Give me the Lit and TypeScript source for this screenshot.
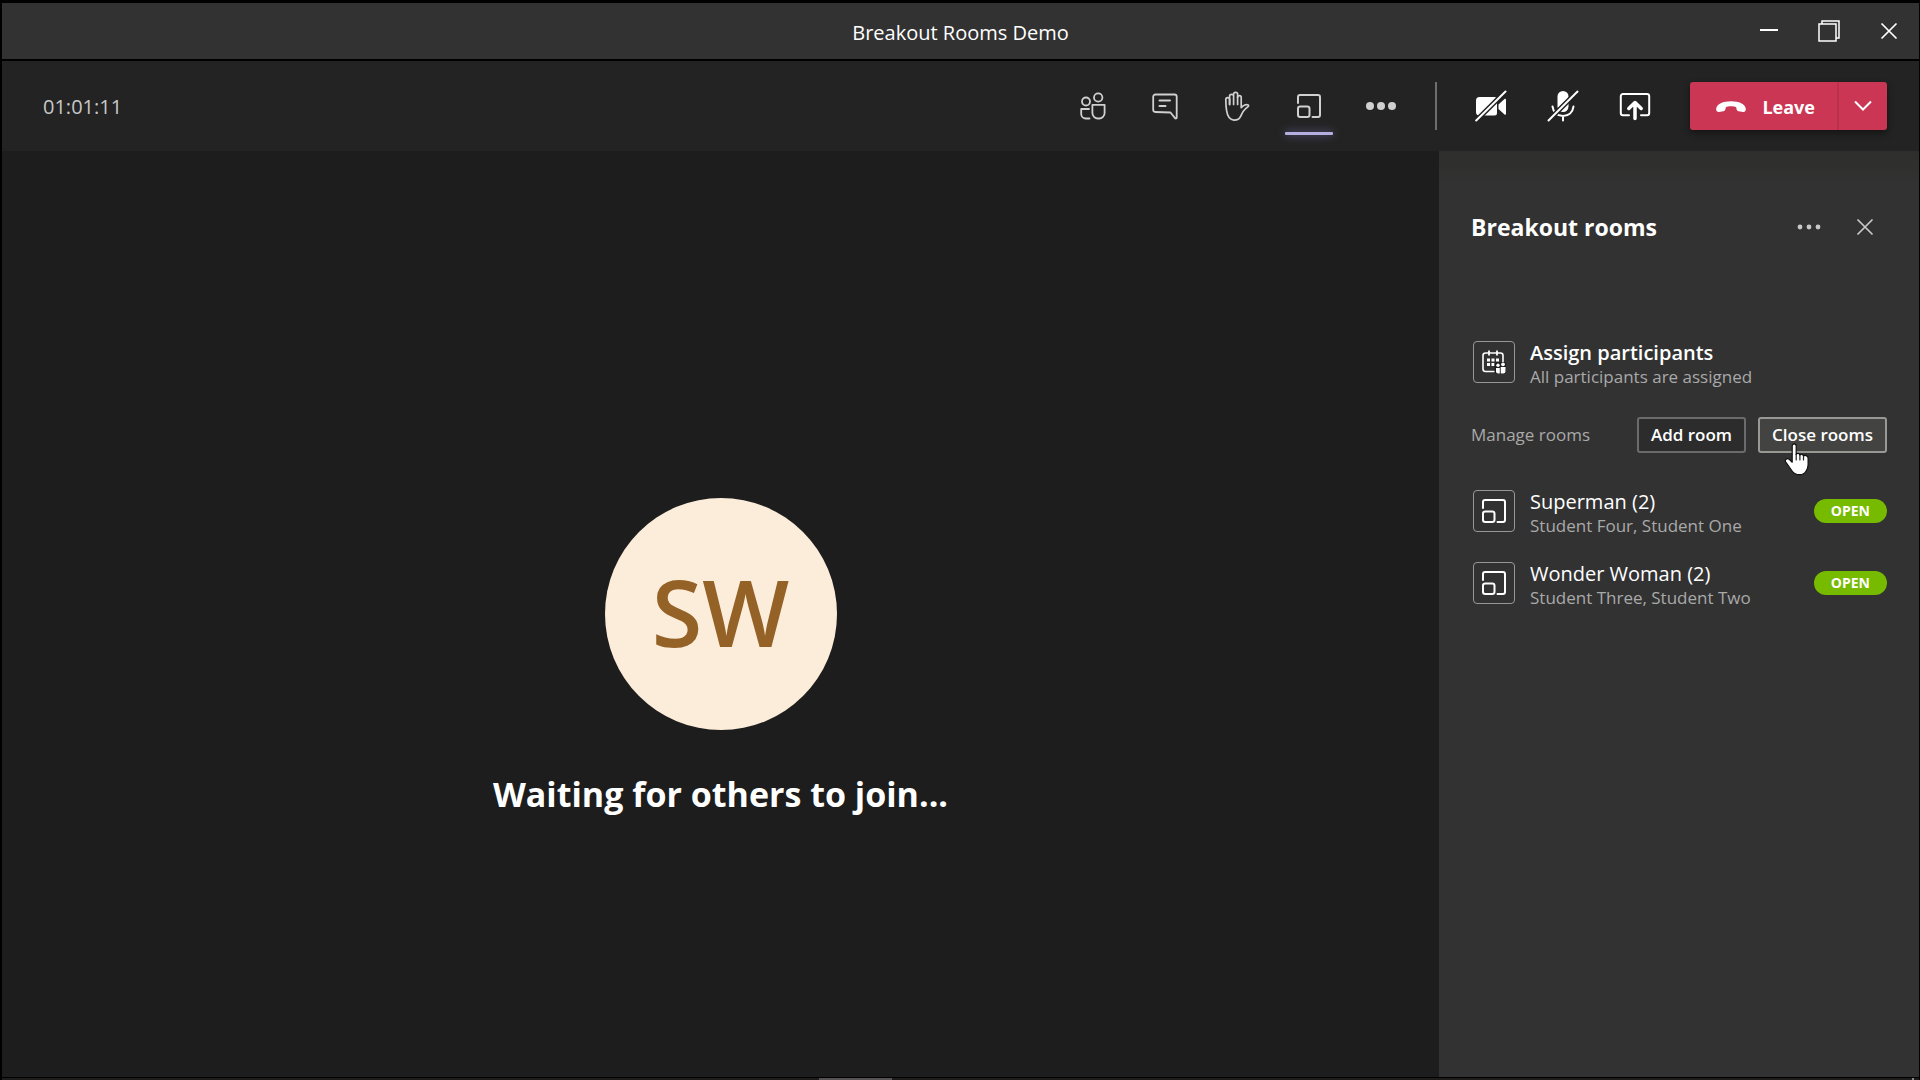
import { LitElement, html, svg, css } from "lit";
import { customElement, state } from "lit/decorators.js";
import { classMap } from "lit/directives/class-map.js";

const roomsIcon = svg`<svg viewBox="0 0 24 24" width="24" height="24" fill="none" stroke="currentColor" stroke-width="2" stroke-linecap="round" aria-hidden="true">
  <path d="M1 9V3a2 2 0 0 1 2-2h18a2 2 0 0 1 2 2v18a2 2 0 0 1-2 2h-5.500"/>
  <rect x="1" y="12.500" width="11.500" height="10.500" rx="2.200"/>
</svg>`;

const peopleIcon = svg`<svg viewBox="0 0 26 28" width="26" height="28" fill="none" stroke="currentColor" stroke-width="1.800" stroke-linecap="round" stroke-linejoin="round" aria-hidden="true">
  <circle cx="6" cy="9.500" r="4"/>
  <circle cx="18.200" cy="5.500" r="4.200"/>
  <path d="M12.400 12.800h12.200v8.200a5.500 5.500 0 0 1-5.500 5.500h-1.200a5.500 5.500 0 0 1-5.500-5.500z"/>
  <path d="M9 17H1.200v5a4.500 4.500 0 0 0 4.500 4.500H9.500"/>
</svg>`;

const chatIcon = svg`<svg viewBox="0 0 26 28" width="26" height="28" fill="none" stroke="currentColor" stroke-width="1.800" stroke-linecap="round" stroke-linejoin="round" aria-hidden="true">
  <path d="M3.500 2.500h19a2.200 2.200 0 0 1 2.200 2.200v20.800c0 1-1 1.300-1.700.6L18.500 20.500 3.300 20a2.200 2.200 0 0 1-2.100-2.200V4.700a2.200 2.200 0 0 1 2.300-2.200z"/>
  <path d="M7.500 8.500h10.500M7.500 14h6" stroke-width="2"/>
</svg>`;

const handIcon = svg`<svg viewBox="0 0 26 30" width="26" height="30" fill="none" stroke="currentColor" stroke-width="1.700" stroke-linecap="round" stroke-linejoin="round" aria-hidden="true">
  <path d="M5.600 13.500V8.300c0-2.200-3.800-2.200-3.800.2 0 3.500.2 7.500.8 11.200.6 3.800 2.600 9.200 7.200 9.400 3 .1 5.500-.7 6.800-3.700 1.500-3.500 3-6.200 5.500-8.200 1.300-1 2.200-1.600 2.400-2.300.4-1.300-2-1.600-3.700-.8-1.500.7-2.500 1.400-3.600 2.600V6.300c0-2.200-3.600-2.200-3.600 0"/>
  <path d="M5.600 13.500V5c0-2.300 4-2.300 4 0v8.500M9.600 12.500V3c0-2.300 4-2.300 4 0v10.500M9.600 5V4M13.600 13.500V6"/>
</svg>`;

const moreIcon = svg`<svg viewBox="0 0 32 10" width="32" height="10" fill="currentColor" aria-hidden="true">
  <circle cx="5" cy="5" r="4"/><circle cx="16" cy="5" r="4"/><circle cx="27" cy="5" r="4"/>
</svg>`;

const smallMoreIcon = svg`<svg viewBox="0 0 24 6" width="24" height="6" fill="currentColor" aria-hidden="true">
  <circle cx="3" cy="3" r="2.400"/><circle cx="12" cy="3" r="2.400"/><circle cx="21" cy="3" r="2.400"/>
</svg>`;

const cameraIcon = svg`<svg viewBox="0 0 32 32" width="32" height="32" aria-hidden="true">
  <path d="M4.500 7h15A2.500 2.500 0 0 1 22 9.500v13.500a2.500 2.500 0 0 1-2.500 2.500h-15A3.500 3.500 0 0 1 1 22V10.500A3.500 3.500 0 0 1 4.500 7z" fill="currentColor"/>
  <path d="M23.500 14.500 29.500 9c.7-.6 1.500-.3 1.500.6v14.200c0 .9-.8 1.200-1.500.6l-6-5.400z" fill="currentColor"/>
  <path d="M1.200 30.500 30.500 1.500" stroke="#232323" stroke-width="5"/>
  <path d="M1.200 30.500 30.500 1.500" stroke="currentColor" stroke-width="2" stroke-linecap="round"/>
</svg>`;

const micIcon = svg`<svg viewBox="0 0 32 32" width="32" height="32" fill="none" stroke="currentColor" stroke-linecap="round" aria-hidden="true">
  <rect x="10.500" y="1" width="11" height="21" rx="5.500" fill="currentColor" stroke="none"/>
  <path d="M5.500 16.500c.8 6 5 9.500 10.500 9.500s9.700-3.500 10.500-9.500M16 26v4.500" stroke-width="2"/>
  <path d="M1.500 30.500 30.500 1.500" stroke="#232323" stroke-width="5"/>
  <path d="M1.500 30.500 30.500 1.500" stroke-width="2"/>
</svg>`;

const shareIcon = svg`<svg viewBox="0 0 32 32" width="32" height="32" fill="none" stroke="currentColor" stroke-linecap="round" stroke-linejoin="round" aria-hidden="true">
  <path d="M10 25.200H4a2.200 2.200 0 0 1-2.200-2.200V6.200A2.200 2.200 0 0 1 4 4h24a2.200 2.200 0 0 1 2.200 2.200V23a2.200 2.200 0 0 1-2.200 2.200h-6" stroke-width="2"/>
  <path d="M16 28.500V13.500M9.800 18.500 16 12.500l6.200 6" stroke-width="3.500"/>
</svg>`;

const phoneIcon = svg`<svg viewBox="0 0 32 14" width="32" height="14" fill="currentColor" aria-hidden="true">
  <path d="M1.200 8.500C1.800 4 8 1.200 16 1.200S30.200 4 30.800 8.500c.2 2.300-.8 3.800-2.800 3.600l-4.300-.8c-1.300-.3-2-1.100-2.200-2.300l-.3-1.800C19 6 13 6 10.800 7.200L10.500 9c-.2 1.200-.9 2-2.200 2.300l-4.300.8c-2 .2-3-1.300-2.800-3.600z"/>
</svg>`;

const chevronIcon = svg`<svg viewBox="0 0 18 12" width="18" height="12" fill="none" stroke="currentColor" stroke-width="2" aria-hidden="true">
  <path d="M1 1.500 9 9.500 17 1.500"/>
</svg>`;

const closeIcon = svg`<svg viewBox="0 0 18 18" width="18" height="18" fill="none" stroke="currentColor" stroke-width="1.700" aria-hidden="true">
  <path d="M1.500 1.500 16.500 16.500M16.500 1.500 1.500 16.500"/>
</svg>`;

const minimizeIcon = svg`<svg viewBox="0 0 18 18" width="18" height="18" fill="currentColor" aria-hidden="true">
  <rect x="0" y="7" width="18" height="2"/>
</svg>`;

const restoreIcon = svg`<svg viewBox="0 0 22 22" width="22" height="22" fill="none" stroke="currentColor" stroke-width="1.500" aria-hidden="true">
  <rect x="1" y="4" width="17" height="17"/>
  <path d="M4 4V1h17v17h-3"/>
</svg>`;

const calendarIcon = svg`<svg viewBox="0 0 24 24" width="24" height="24" fill="none" aria-hidden="true">
  <rect x="1" y="3" width="20" height="18.500" rx="2.500" stroke="currentColor" stroke-width="1.600"/>
  <path d="M7 .5v5M15 .5v5" stroke="currentColor" stroke-width="1.800"/>
  <path d="M5 8.500h3v3H5zM9.500 8.500h3v3h-3zM14 8.500h3v3h-3zM5 13h3v3H5zM9.500 13h3v3h-3z" fill="currentColor"/>
  <rect x="12.500" y="12" width="11.500" height="12" rx="2" fill="#1d1d1d"/>
  <circle cx="16" cy="15.300" r="1.700" fill="currentColor"/>
  <circle cx="21" cy="14.300" r="1.900" fill="currentColor"/>
  <path d="M14 18h3.800v5.500H16a2 2 0 0 1-2-2zM18.700 17h4.800v4.500a2 2 0 0 1-2 2h-2.800z" fill="currentColor"/>
</svg>`;

const pointerIcon = svg`<svg viewBox="0 0 26 33" width="26" height="33" aria-hidden="true">
  <path d="M8.200 3.200c0-3 4-3 4 0v8.300c.6-1.700 3.600-1.300 3.700.7.700-1.500 3.500-1.200 3.600 1 .8-1.300 4.600-1 4.600 2v6.300c0 3-1 5-2 6.500-1.300 2.500-3 3.700-6.500 3.700-3.200 0-5.500-.8-7.500-3.700L1.800 19.200c-1.500-2 1-4.500 3.400-2.900l3 2.900z" fill="#fff" stroke="#111" stroke-width="1.200" stroke-linejoin="round"/>
  <path d="M12.200 11v6M15.900 12v5M19.500 13.500V17" stroke="#222" stroke-width="1.200" stroke-linecap="round"/>
</svg>`;

interface Room {
  name: string;
  members: string[];
}

@customElement("breakout-panel")
export class BreakoutPanel extends LitElement {
  @state() private rooms: Room[] = [
    { name: "Superman", members: ["Student Four", "Student One"] },
    { name: "Wonder Woman", members: ["Student Three", "Student Two"] },
  ];

  static styles = css`
    :host {
      display: block;
      box-sizing: border-box;
      padding: 52px 32px;
      background: linear-gradient(#2e2e2d, #323232 36px);
      color: #fff;
    }
    button {
      font: inherit;
      color: inherit;
      margin: 0;
      cursor: pointer;
    }
    .head {
      display: flex;
      align-items: center;
      height: 48px;
      margin-bottom: 87px;
    }
    h2 {
      flex: 1;
      margin: 0;
      font-size: 23px;
      line-height: 32px;
      font-weight: 700;
    }
    .icon-button {
      display: grid;
      place-items: center;
      width: 44px;
      height: 44px;
      padding: 0;
      border: 0;
      background: none;
      color: #c8c8c8;
    }
    .icon-button + .icon-button {
      margin-left: 12px;
    }
    .row {
      display: flex;
      align-items: center;
      gap: 15px;
      height: 48px;
      padding-left: 2px;
    }
    .tile {
      display: grid;
      place-items: center;
      box-sizing: border-box;
      width: 42px;
      height: 42px;
      border: 1px solid #979797;
      border-radius: 4px;
    }
    .text {
      flex: 1;
      min-width: 0;
      padding-top: 6px;
    }
    .name,
    .sub {
      margin: 0;
      line-height: 24px;
      white-space: nowrap;
    }
    .name {
      font-size: 20px;
      font-weight: 500;
    }
    .strong {
      font-weight: 600;
    }
    .sub,
    .label {
      font-size: 17px;
      font-weight: 400;
      color: #a9a9a9;
    }
    .manage {
      display: flex;
      align-items: center;
      gap: 12px;
      margin: 31px 0 34px;
    }
    .label {
      flex: 1;
      margin: 0;
      line-height: 24px;
    }
    .action {
      position: relative;
      height: 36px;
      padding: 0 12px;
      border: 2px solid #6b6b6b;
      border-radius: 3px;
      background: #2d2c2c;
      font-size: 17px;
      line-height: 24px;
      font-weight: 600;
      white-space: nowrap;
    }
    .hovered {
      background: #434341;
      border-color: #989895;
    }
    .pointer {
      position: absolute;
      left: 24px;
      top: 24px;
      display: block;
      height: 33px;
      pointer-events: none;
    }
    ul {
      display: grid;
      gap: 24px;
      margin: 0;
      padding: 0;
      list-style: none;
    }
    .status {
      height: 24px;
      padding: 0 17px;
      border-radius: 12px;
      background: #77bb00;
      font-size: 14px;
      line-height: 24px;
      font-weight: 700;
    }
  `;

  render() {
    return html`
      <header class="head">
        <h2>Breakout rooms</h2>
        <button class="icon-button" aria-label="More options">${smallMoreIcon}</button>
        <button class="icon-button" aria-label="Close panel">${closeIcon}</button>
      </header>
      <section class="row">
        <span class="tile">${calendarIcon}</span>
        <div class="text">
          <h3 class="name strong">Assign participants</h3>
          <p class="sub">All participants are assigned</p>
        </div>
      </section>
      <section class="manage">
        <p class="label">Manage rooms</p>
        <button class="action">Add room</button>
        <button class="action hovered">
          Close rooms<span class="pointer">${pointerIcon}</span>
        </button>
      </section>
      <ul>
        ${this.rooms.map(
          (room) => html`<li class="row">
            <span class="tile">${roomsIcon}</span>
            <div class="text">
              <h3 class="name">${room.name} (${room.members.length})</h3>
              <p class="sub">${room.members.join(", ")}</p>
            </div>
            <span class="status">OPEN</span>
          </li>`
        )}
      </ul>
    `;
  }
}

@customElement("app-root")
export class AppRoot extends LitElement {
  @state() private activeTool = "Breakout rooms";

  private tools = [
    { label: "Participants", icon: peopleIcon },
    { label: "Chat", icon: chatIcon },
    { label: "Raise hand", icon: handIcon },
    { label: "Breakout rooms", icon: roomsIcon },
    { label: "More actions", icon: moreIcon },
  ];

  private devices = [
    { label: "Turn camera on", icon: cameraIcon },
    { label: "Unmute", icon: micIcon },
    { label: "Share screen", icon: shareIcon },
  ];

  static styles = css`
    :host {
      display: flex;
      flex-direction: column;
      box-sizing: border-box;
      min-height: 100vh;
      padding: 3px 1px 0 2px;
      background: #000;
      color: #fff;
      font-family: "Open Sans", "Noto Sans", sans-serif;
    }
    button {
      display: grid;
      place-items: center;
      margin: 0;
      padding: 0;
      border: 0;
      background: none;
      font: inherit;
      color: inherit;
      cursor: pointer;
    }
    .titlebar {
      display: grid;
      grid-template-columns: 1fr auto 1fr;
      align-items: center;
      height: 56px;
      margin-bottom: 2px;
      background: #323232;
    }
    h1 {
      grid-column: 2;
      margin: 0;
      padding-top: 4px;
      font-size: 20px;
      line-height: 28px;
      font-weight: 400;
    }
    .window {
      display: flex;
      justify-self: end;
    }
    .window button {
      width: 60px;
      height: 56px;
    }
    .toolbar {
      display: flex;
      align-items: center;
      height: 90px;
      padding: 0 32px 0 41px;
      background: #232323;
    }
    .timer {
      flex: 1;
      padding-top: 2px;
      font-size: 20px;
      line-height: 28px;
      color: #c8c8c8;
    }
    .tools,
    .devices {
      display: flex;
    }
    .tools {
      color: #d0d0d0;
    }
    .tool {
      position: relative;
      width: 72px;
      height: 72px;
    }
    .active::after {
      content: "";
      position: absolute;
      left: 12px;
      bottom: 7px;
      width: 48px;
      height: 3px;
      border-radius: 1px;
      background: #b4afdf;
      box-shadow: 0 0 8px #6b669e;
    }
    .divider {
      width: 2px;
      height: 48px;
      margin: 0 18px;
      background: #6e6e6e;
    }
    .leave {
      display: flex;
      height: 48px;
      margin-left: 19px;
      border-radius: 3px;
      background: #cb3654;
      box-shadow: 0 3px 6px #141414;
    }
    .hangup {
      display: flex;
      align-items: center;
      gap: 15px;
      padding: 2px 22px 0 25px;
      font-size: 18px;
      line-height: 28px;
      font-weight: 700;
    }
    .options {
      width: 50px;
      border-left: 2px solid #bb304c;
    }
    .main {
      display: flex;
      flex: 1;
    }
    .stage {
      flex: 1;
      display: grid;
      grid-template-rows: 1fr auto 1fr;
      justify-items: center;
      background: #1d1d1d;
    }
    .avatar {
      grid-row: 2;
      display: grid;
      place-items: center;
      box-sizing: border-box;
      width: 232px;
      height: 232px;
      padding-bottom: 4px;
      border-radius: 50%;
      background: #fcecda;
      color: #946226;
      font-size: 92px;
      line-height: 112px;
      font-weight: 600;
    }
    .waiting {
      grid-row: 3;
      margin: 0;
      padding-top: 40px;
      font-size: 34px;
      line-height: 48px;
      font-weight: 700;
    }
    breakout-panel {
      width: 480px;
    }
    .scroll {
      display: grid;
      grid-template-columns: 1fr auto 1fr;
      height: 2px;
      margin-top: 1px;
      background: #1f1c1c;
    }
    .thumb {
      width: 73px;
      margin-right: 211px;
      background: #555353;
    }
    .corner {
      justify-self: end;
      width: 2px;
      margin-right: 5px;
      background: #8a8a8a;
    }
  `;

  private tool(label: string, icon: unknown) {
    return html`<button
      class=${classMap({ tool: true, active: label === this.activeTool })}
      aria-label=${label}
      @click=${() => (this.activeTool = label)}
    >
      ${icon}
    </button>`;
  }

  render() {
    return html`
      <header class="titlebar">
        <h1>Breakout Rooms Demo</h1>
        <div class="window">
          <button aria-label="Minimize">${minimizeIcon}</button>
          <button aria-label="Restore">${restoreIcon}</button>
          <button aria-label="Close">${closeIcon}</button>
        </div>
      </header>
      <nav class="toolbar" aria-label="Meeting controls">
        <span class="timer">01:01:11</span>
        <div class="tools">${this.tools.map((t) => this.tool(t.label, t.icon))}</div>
        <span class="divider"></span>
        <div class="devices">
          ${this.devices.map(
            (d) => html`<button class="tool" aria-label=${d.label}>${d.icon}</button>`
          )}
        </div>
        <div class="leave">
          <button class="hangup">${phoneIcon}<span>Leave</span></button>
          <button class="options" aria-label="Leave options">${chevronIcon}</button>
        </div>
      </nav>
      <div class="main">
        <main class="stage">
          <div class="avatar">SW</div>
          <p class="waiting">Waiting for others to join...</p>
        </main>
        <breakout-panel></breakout-panel>
      </div>
      <div class="scroll">
        <span></span><span class="thumb"></span><span class="corner"></span>
      </div>
    `;
  }
}
